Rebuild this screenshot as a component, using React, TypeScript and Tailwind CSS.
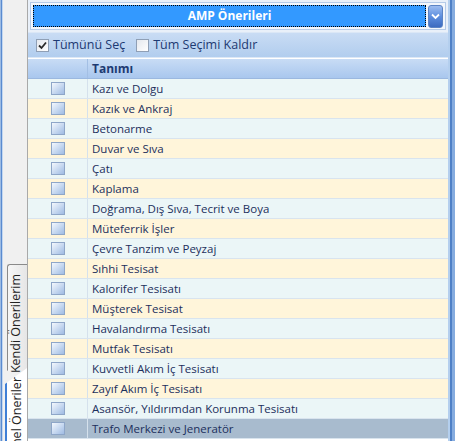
import React from "react";

const rows = [
  "Kazı ve Dolgu",
  "Kazık ve Ankraj",
  "Betonarme",
  "Duvar ve Sıva",
  "Çatı",
  "Kaplama",
  "Doğrama, Dış Sıva, Tecrit ve Boya",
  "Müteferrik İşler",
  "Çevre Tanzim ve Peyzaj",
  "Sıhhi Tesisat",
  "Kalorifer Tesisatı",
  "Müşterek Tesisat",
  "Havalandırma Tesisatı",
  "Mutfak Tesisatı",
  "Kuvvetli Akım İç Tesisatı",
  "Zayıf Akım İç Tesisatı",
  "Asansör, Yıldırımdan Korunma Tesisatı",
  "Trafo Merkezi ve Jeneratör",
];

function RowBox() {
  return (
    <div className="w-[14px] h-[13px] border border-[#8ea6c8] bg-gradient-to-br from-[#f4f8fd] via-[#c9daf1] to-[#9fbbe3]" />
  );
}

function CheckBox({ checked }: { checked?: boolean }) {
  return (
    <div className="w-[13px] h-[13px] border border-[#8f9fb5] bg-gradient-to-br from-[#e4e8ee] to-[#ffffff] flex items-center justify-center">
      {checked && (
        <svg width="9" height="9" viewBox="0 0 9 9">
          <path d="M1 4.5 L3.5 7 L8 1.5" stroke="#2a2a2a" strokeWidth="1.8" fill="none" />
        </svg>
      )}
    </div>
  );
}

export default function App() {
  return (
    <div
      className="w-[455px] h-[441px] flex overflow-hidden bg-[#f0f0f0] text-[12px]"
      style={{ fontFamily: '"Open Sans", "Noto Sans", sans-serif' }}
    >
      {/* left frame border */}
      <div className="w-[3px] h-full flex">
        <div className="w-[1px] bg-[#9dbbe3]" />
        <div className="w-[1px] bg-[#5a8bd0]" />
        <div className="w-[1px] bg-[#c3d7f0]" />
      </div>

      {/* vertical tabs strip */}
      <div className="w-[24px] h-full relative bg-[#f0f0f0]">
        <div
          className="absolute left-[4px] top-[264px] w-[20px] h-[112px] bg-gradient-to-r from-[#f7f7f7] to-[#e6e6e6] border border-[#8a8a8a] border-r-0 rounded-tl-[3px]"
          style={{ clipPath: "polygon(0 0, 100% 0, 100% 100%, 0 95%)" }}
        >
          <span
            className="absolute left-[2px] top-[9px] text-[#222] whitespace-nowrap text-[12.5px] leading-none"
            style={{ writingMode: "vertical-rl", transform: "rotate(180deg)" }}
          >
            Kendi Önerilerim
          </span>
        </div>
        <div
          className="absolute left-[2px] top-[368px] w-[22px] h-[110px] bg-white border-l-[2px] border-[#3f7fd6]"
          style={{ clipPath: "polygon(0 16px, 100% 0, 100% 100%, 0 100%)" }}
        >
          <span
            className="absolute left-[4px] top-[9px] text-[#222] whitespace-nowrap text-[12.5px] leading-none"
            style={{ writingMode: "vertical-rl", transform: "rotate(180deg)" }}
          >
            Genel Öneriler
          </span>
        </div>
      </div>

      {/* main panel */}
      <div className="w-[421px] h-full flex flex-col border-l border-[#a9a9a9] bg-white">
        {/* combobox area */}
        <div className="h-[32px] bg-[#e9f0f9] px-[2px] pt-[2px] pb-[2px]">
          <div className="h-full border border-[#b5cbe8] bg-[#f3f7fc] flex items-center px-[2px] gap-[2px]">
            <div className="flex-1 h-[22px] bg-[#3399ff] border border-dotted border-black flex items-center justify-center">
              <span className="text-white font-bold text-[12px]">AMP Önerileri</span>
            </div>
            <div className="w-[15px] h-[23px] rounded-[3px] border border-[#5c84c4] bg-gradient-to-b from-[#9dbdf0] via-[#5d8ede] to-[#3d6bc0] flex items-center justify-center">
              <svg width="9" height="7" viewBox="0 0 9 7">
                <path d="M1 1.5 L4.5 5 L8 1.5" stroke="#ffffff" strokeWidth="1.8" fill="none" />
              </svg>
            </div>
          </div>
        </div>

        {/* toolbar */}
        <div className="h-[26px] border-t border-[#dbe7f6] bg-gradient-to-b from-[#c9dcf4] to-[#b1cdee] border-b border-[#8fb0dc] flex items-center pl-[8px] gap-[4px] text-[12.5px]">
          <CheckBox checked />
          <span className="text-[#1d3a72] mr-[7px]">Tümünü Seç</span>
          <CheckBox />
          <span className="text-[#1d3a72]">Tüm Seçimi Kaldır</span>
        </div>

        {/* header */}
        <div className="h-[20px] flex bg-gradient-to-b from-[#c8dcf5] to-[#a9c7ee] border-b border-[#9bb8e0] mt-[1px]">
          <div className="w-[60px] border-r border-[#a3bfe4]" />
          <div className="flex-1 flex items-center pl-[4px]">
            <span className="font-bold text-[#1d3a72]">Tanımı</span>
          </div>
        </div>

        {/* rows */}
        <div className="flex flex-col">
          {rows.map((r, i) => {
            const selected = i === rows.length - 1;
            const bg = selected ? "bg-[#a8bbce]" : i % 2 === 0 ? "bg-[#ebf6f7]" : "bg-[#fff5da]";
            return (
              <div key={r} className={`h-[20px] flex ${bg} border-b border-[#d9e4ee]`}>
                <div className="w-[60px] border-r border-[#d5e1ec] flex items-center justify-center">
                  <RowBox />
                </div>
                <div className="flex-1 flex items-center pl-[4px]">
                  <span className="text-[#1c2f5c] whitespace-nowrap text-[11.5px]">{r}</span>
                </div>
              </div>
            );
          })}
        </div>
      </div>

      {/* right frame border */}
      <div className="w-[7px] h-full flex">
        <div className="w-[2px] bg-[#b4cfee]" />
        <div className="w-[2px] bg-[#4f80c6]" />
        <div className="w-[3px] bg-[#86acdf]" />
      </div>
    </div>
  );
}
